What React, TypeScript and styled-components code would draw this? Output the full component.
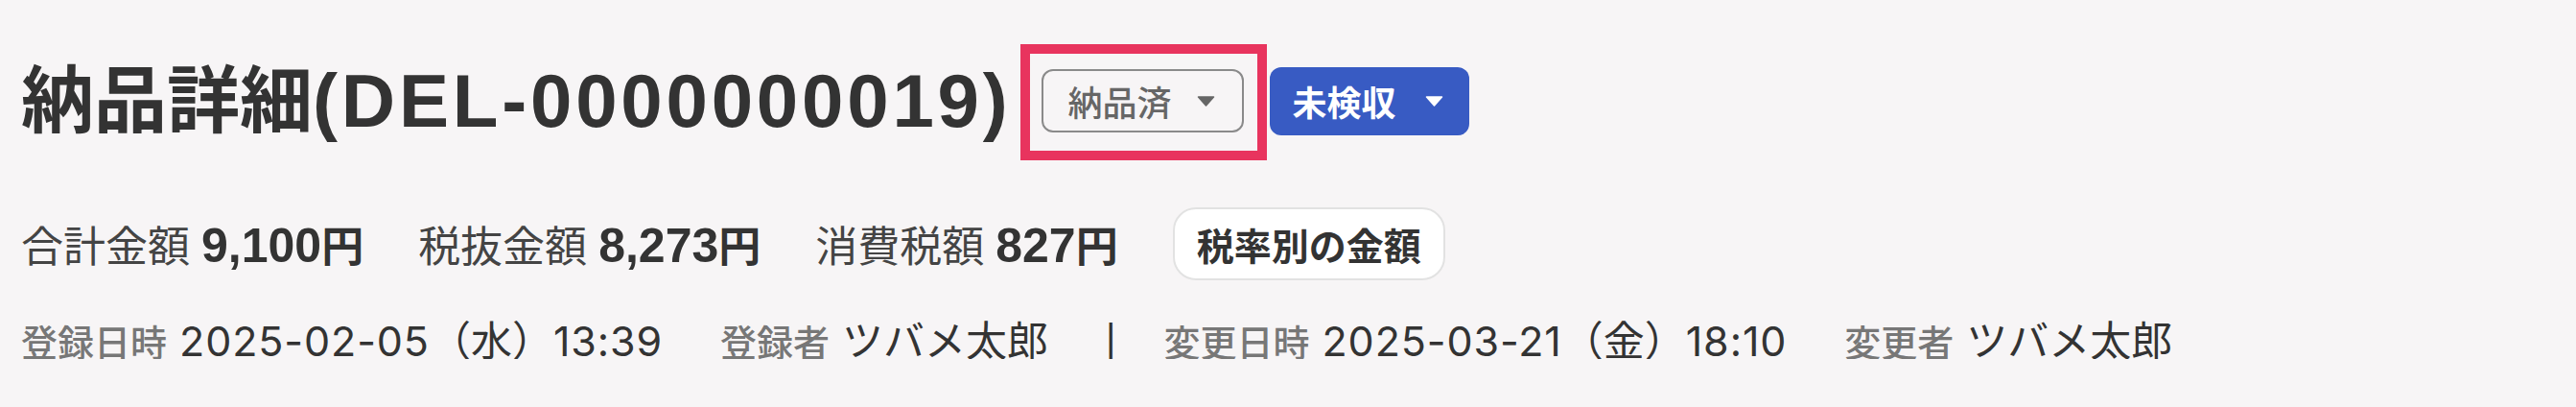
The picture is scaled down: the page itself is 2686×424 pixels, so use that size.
import React from 'react';
import styled, { createGlobalStyle } from 'styled-components';

const GlobalStyle = createGlobalStyle`
  html, body {
    margin: 0;
    padding: 0;
    background: #f7f5f6;
  }
  body {
    font-family: "Liberation Sans", "Noto Sans CJK JP", sans-serif;
    color: #333;
  }
`;

const Page = styled.div`
  display: flex;
  flex-direction: column;
  padding: 50px 22px 0;
`;

const Header = styled.div`
  display: flex;
  align-items: center;
  height: 110px;
`;

const Title = styled.h1`
  margin: 0;
  font-family: "Liberation Sans", "Noto Sans CJK JP", sans-serif;
  font-size: 76px;
  line-height: 1;
  font-weight: 700;
  color: #333;
  white-space: nowrap;
`;

const TitleCode = styled.span`
  font-size: 78px;
  letter-spacing: 3.8px;
`;

const StatusWrap = styled.div`
  position: relative;
  margin-left: 31px;
  display: flex;
`;

const Highlight = styled.div`
  position: absolute;
  top: -26px;
  right: -24px;
  bottom: -29px;
  left: -22px;
  border: 10px solid #e8345e;
  pointer-events: none;
`;

const StatusButton = styled.button<{ $primary?: boolean }>`
  display: flex;
  align-items: center;
  gap: ${p => (p.$primary ? '30px' : '26px')};
  height: ${p => (p.$primary ? '71px' : '66px')};
  padding: ${p => (p.$primary ? '0 27px 0 24px' : '0 28px 0 26px')};
  border: ${p => (p.$primary ? 'none' : '2px solid #8a8a8a')};
  border-radius: 12px;
  background: ${p => (p.$primary ? '#385bc3' : 'transparent')};
  color: ${p => (p.$primary ? '#fff' : '#666')};
  font-family: "Noto Sans CJK JP", sans-serif;
  font-size: 36px;
  font-weight: ${p => (p.$primary ? 700 : 500)};
  line-height: 1;
  cursor: pointer;
`;

const ButtonGap = styled.div`
  width: 27px;
`;

const Caret = () => (
  <svg width="19" height="11" viewBox="0 0 19 11">
    <path d="M1.5 1 H17.5 L9.5 10 Z" fill="currentColor" stroke="currentColor" strokeWidth="1.5" strokeLinejoin="round" />
  </svg>
);

const SummaryRow = styled.div`
  display: flex;
  align-items: center;
  height: 76px;
  margin-top: 56px;
`;

const SummaryItem = styled.div`
  display: flex;
  align-items: baseline;
  gap: 12px;
  margin-right: 57px;
  white-space: nowrap;
`;

const SummaryLabel = styled.span`
  font-family: "Noto Sans CJK JP", sans-serif;
  font-size: 44px;
  color: #444;
`;

const SummaryValue = styled.span`
  font-family: "Liberation Sans", "Noto Sans CJK JP", sans-serif;
  font-size: 44px;
  font-weight: 700;
  color: #333;
`;

const SummaryNum = styled.span`
  font-size: 50px;
`;

const TaxButton = styled.button`
  height: 76px;
  padding: 0 23px;
  border: 2px solid #e2e2e2;
  border-radius: 24px;
  background: #fff;
  color: #333;
  font-family: "Noto Sans CJK JP", sans-serif;
  font-size: 39px;
  font-weight: 700;
  line-height: 1;
  cursor: pointer;
`;

const MetaRow = styled.div`
  display: flex;
  align-items: center;
  height: 44px;
  margin-top: 38px;
  white-space: nowrap;
`;

const MetaItem = styled.div`
  display: flex;
  align-items: baseline;
  gap: 13px;
  margin-right: 60px;
`;

const MetaLabel = styled.span`
  font-family: "Noto Sans CJK JP", sans-serif;
  font-size: 38px;
  font-weight: 500;
  color: #777;
`;

const MetaValue = styled.span`
  font-family: "Inter", "Noto Sans CJK JP", sans-serif;
  font-size: 43px;
  color: #333;
`;

const MetaNum = styled.span`
  letter-spacing: 0.9px;
`;

const Separator = styled.span`
  margin-right: 50px;
  font-family: "Liberation Sans", sans-serif;
  font-size: 40px;
  color: #333;
`;

const summary = [
  { label: '合計金額', value: '9,100' },
  { label: '税抜金額', value: '8,273' },
  { label: '消費税額', value: '827' },
];

export default function App() {
  return (
    <>
      <GlobalStyle />
      <Page>
        <Header>
          <Title>
            納品詳細<TitleCode>(DEL-0000000019)</TitleCode>
          </Title>
          <StatusWrap>
            <StatusButton>
              納品済
              <Caret />
            </StatusButton>
            <Highlight />
          </StatusWrap>
          <ButtonGap />
          <StatusButton $primary>
            未検収
            <Caret />
          </StatusButton>
        </Header>

        <SummaryRow>
          {summary.map(s => (
            <SummaryItem key={s.label}>
              <SummaryLabel>{s.label}</SummaryLabel>
              <SummaryValue>
                <SummaryNum>{s.value}</SummaryNum>円
              </SummaryValue>
            </SummaryItem>
          ))}
          <TaxButton>税率別の金額</TaxButton>
        </SummaryRow>

        <MetaRow>
          <MetaItem>
            <MetaLabel>登録日時</MetaLabel>
            <MetaValue>
              <MetaNum>2025-02-05</MetaNum>（水）<MetaNum>13:39</MetaNum>
            </MetaValue>
          </MetaItem>
          <MetaItem>
            <MetaLabel>登録者</MetaLabel>
            <MetaValue>ツバメ太郎</MetaValue>
          </MetaItem>
          <Separator>|</Separator>
          <MetaItem>
            <MetaLabel>変更日時</MetaLabel>
            <MetaValue>
              <MetaNum>2025-03-21</MetaNum>（金）<MetaNum>18:10</MetaNum>
            </MetaValue>
          </MetaItem>
          <MetaItem>
            <MetaLabel>変更者</MetaLabel>
            <MetaValue>ツバメ太郎</MetaValue>
          </MetaItem>
        </MetaRow>
      </Page>
    </>
  );
}
